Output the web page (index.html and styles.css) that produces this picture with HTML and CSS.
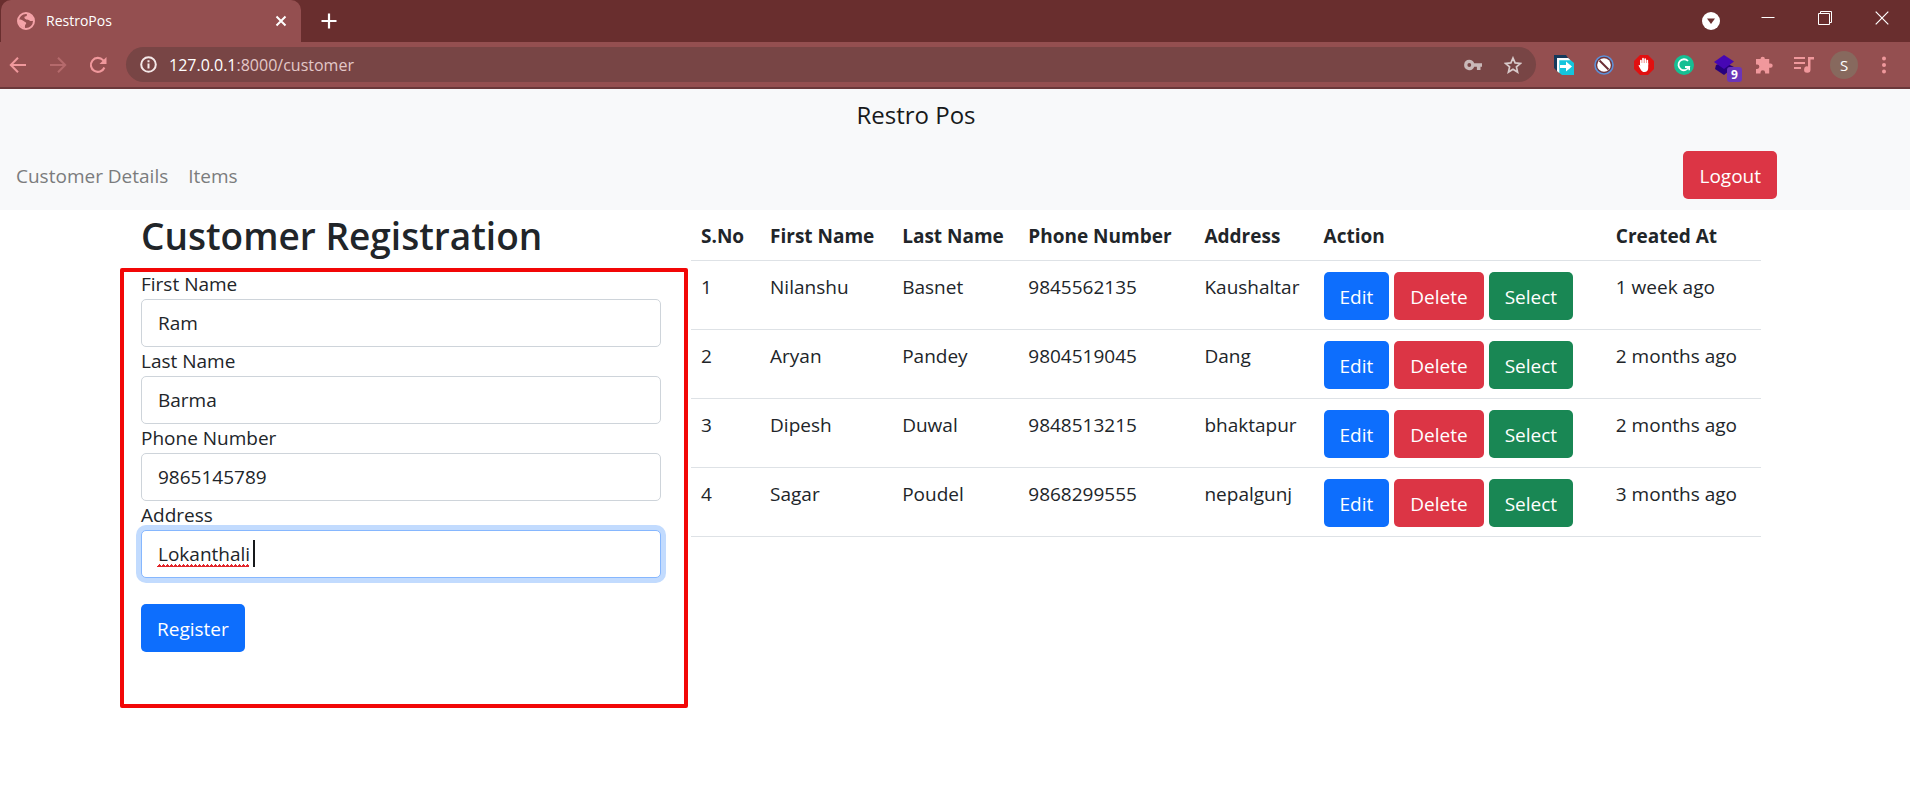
FILE: index.html
```html
<!DOCTYPE html>
<html lang="en">
<head>
<meta charset="utf-8">
<title>RestroPos</title>
<link rel="stylesheet" href="styles.css">
</head>
<body>
<header class="browser">
  <div class="tabstrip">
    <div class="tab">
      <svg class="favicon" viewBox="0 0 18 18" width="18" height="18"><circle cx="9" cy="9" r="8" fill="#944f50" stroke="#f4a3a8" stroke-width="2"/><path d="M1.500 7.500c2.500-.2 4.100.5 5.100 1.500 1 1 2 .8 2.500 1.700.4 1-.6 1.500-1 2.500-.3.800-.1 2-.1 3.200A8 8 0 0 1 1.500 7.500zM7.500 4.800l2.200-.7.300-2.600a7.500 7.500 0 0 1 6.500 7c-1.700 1-3.200.6-4-.1-1-.8-2.200-.3-3.200-.8C8.100 7 7 6 7.500 4.800z" fill="#f4a3a8"/></svg>
      <span class="tab-title">RestroPos</span>
      <button class="tab-close" aria-label="Close tab"><svg viewBox="0 0 12 12" width="12" height="12"><path d="M1.500 1.500l9 9M10.500 1.500l-9 9" stroke="#fff" stroke-width="2"/></svg></button>
    </div>
    <button class="new-tab" aria-label="New tab"><svg viewBox="0 0 16 16" width="16" height="16"><path d="M8 .5v15M.5 8h15" stroke="#fff" stroke-width="2.200"/></svg></button>
    <div class="window-controls">
      <button class="win" aria-label="Tab search"><svg class="low" viewBox="0 0 18 18" width="18" height="18"><circle cx="9" cy="9" r="9" fill="#fff"/><path d="M5 6.500h8l-4 5.500z" fill="#692e2e"/></svg></button>
      <button class="win" aria-label="Minimize"><svg viewBox="0 0 14 14" width="14" height="14"><path d="M.5 6.500h13" stroke="#fff"/></svg></button>
      <button class="win" aria-label="Restore"><svg viewBox="0 0 14 14" width="14" height="14"><path d="M.5 2.500h11v11H.5zM2.500 2.500v-2h11v11h-2" stroke="#fff" fill="none"/></svg></button>
      <button class="win" aria-label="Close"><svg viewBox="0 0 14 14" width="14" height="14"><path d="M.7.7l12.600 12.600M13.300.7L.7 13.300" stroke="#fff" stroke-width="1.200"/></svg></button>
    </div>
  </div>
  <div class="toolbar">
    <div class="nav-buttons">
      <button class="tool" aria-label="Back"><svg viewBox="0 0 18 18" width="18" height="18"><path d="M17 9H2M9 1.800L1.800 9 9 16.200" stroke="#f0989c" stroke-width="2" fill="none"/></svg></button>
      <button class="tool" aria-label="Forward"><svg viewBox="0 0 18 18" width="18" height="18"><path d="M1 9h15M9 1.800L16.200 9 9 16.200" stroke="#b56a6c" stroke-width="2" fill="none"/></svg></button>
      <button class="tool" aria-label="Reload"><svg viewBox="0 0 18 18" width="18" height="18"><path d="M15.400 11.500A7 7 0 1 1 14 4.100L15.500 6" stroke="#f0989c" stroke-width="2.100" fill="none"/><path d="M17.500 1v7h-7z" fill="#f0989c"/></svg></button>
    </div>
    <div class="omnibox">
      <svg viewBox="0 0 17 17" width="17" height="17"><circle cx="8.500" cy="8.500" r="7.300" stroke="#f5e9e9" stroke-width="2" fill="none"/><path d="M8.500 7.500v5M8.500 4.300v2" stroke="#f5e9e9" stroke-width="2"/></svg>
      <span class="url"><span class="host">127.0.0.1</span>:8000/customer</span>
      <button class="tool" aria-label="Passwords"><svg viewBox="0 0 18 12" width="18" height="12"><path fill-rule="evenodd" d="M5.300.7a5.200 5.200 0 0 1 4.900 3.500H18v3.600h-1.500V11h-3.600V7.800h-2.700A5.200 5.200 0 1 1 5.300.7zm0 3.400a1.900 1.900 0 1 0 0 3.800 1.900 1.900 0 0 0 0-3.800z" fill="#c9b8b8"/></svg></button>
      <button class="tool" aria-label="Bookmark"><svg viewBox="0 0 18 18" width="18" height="18"><path d="M9 2l2.100 4.900 5.300.5-4 3.500 1.200 5.200L9 13.300l-4.600 2.800 1.200-5.200-4-3.500 5.300-.5z" stroke="#d8caca" stroke-width="1.700" fill="none"/></svg></button>
    </div>
    <div class="extensions">
      <button class="tool" aria-label="Page assistant"><svg viewBox="0 0 20 20" width="20" height="20"><path d="M0 0h12l2 3H3v13L0 13z" fill="#163a5c"/><path d="M3 3h11l6 5v12H8l-5-4z" fill="#14c4dc"/><path d="M3 3h11l2.500 2.300H5.300V18L3 16z" fill="#fff"/><path d="M6 10h6V6.500l6 5-6 5V13H6z" fill="#fff"/></svg></button>
      <button class="tool" aria-label="Blocker"><svg viewBox="0 0 20 20" width="20" height="20"><circle cx="10" cy="10" r="9" fill="#70343a" stroke="#5d8fd6" stroke-width="1.600"/><circle cx="10" cy="10" r="6.800" fill="#fff"/><path d="M5.500 5.500l9 9" stroke="#6a2e35" stroke-width="1.900"/></svg></button>
      <button class="tool" aria-label="Ad blocker"><svg viewBox="0 0 20 20" width="20" height="20"><path d="M6 0h8l6 6v8l-6 6H6l-6-6V6z" fill="#e01010"/><path d="M6.900 10V5.500M9 9V3.700M11.200 9V4M13.300 10V5.500" stroke="#fff" stroke-width="1.700" stroke-linecap="round"/><path d="M6 8h8.200v5c0 2.500-1.500 4-3.700 4-2 0-3-.9-4-2.800l-2-3.700c.9-.8 1.500-.4 2 .6z" fill="#fff"/></svg></button>
      <button class="tool" aria-label="Grammar"><svg viewBox="0 0 20 20" width="20" height="20"><circle cx="10" cy="10" r="10" fill="#15bf93"/><path d="M14 6A5.500 5.500 0 1 0 15 12H11" stroke="#fff" stroke-width="1.800" fill="none"/><path d="M15.200 11.200v4" stroke="#fff" stroke-width="1.600"/></svg></button>
      <button class="tool badged" aria-label="Layers, 9"><svg viewBox="0 0 20 20" width="20" height="20"><path d="M2 10l8-3 10 5-10 8L1 14z" fill="#27007e"/><path d="M10 0l10 6.500-10 7.500L0 7z" fill="#4606b4"/></svg><span class="badge">9</span></button>
      <button class="tool" aria-label="Extensions"><svg viewBox="0 0 18 18" width="18" height="18"><path d="M5.500 3a2.200 2.200 0 0 1 4.400 0h4.300v4.400h1.300a2.200 2.200 0 0 1 0 4.400h-1.300v5.700h-4.100v-1a2.300 2.300 0 0 0-4.600 0v1H1v-4.600h1.200a2 2 0 0 0 0-4.300H1V3z" fill="#f0989c"/></svg></button>
      <button class="tool" aria-label="Media"><svg viewBox="0 0 20 18" width="20" height="18"><path d="M0 2h11M0 7h11M0 12h7" stroke="#f0989c" stroke-width="2"/><path d="M14 1h6v2.500h-3.500v10a3.200 3.200 0 1 1-2.500-3z" fill="#f0989c"/></svg></button>
      <button class="tool" aria-label="Profile"><span class="avatar">S</span></button>
      <button class="tool" aria-label="Menu"><svg viewBox="0 0 4 18" width="4" height="18"><circle cx="2" cy="2.500" r="2" fill="#f0989c"/><circle cx="2" cy="9" r="2" fill="#f0989c"/><circle cx="2" cy="15.500" r="2" fill="#f0989c"/></svg></button>
    </div>
  </div>
</header>

<nav class="site-nav">
  <a class="brand" href="#">Restro Pos</a>
  <div class="nav-row">
    <div class="links"><a href="#">Customer Details</a><a href="#">Items</a></div>
    <button class="btn red">Logout</button>
  </div>
</nav>

<div class="page">
<main class="content">
  <section>
    <h1>Customer Registration</h1>
    <form class="register">
      <label for="first">First Name</label>
      <input id="first" type="text" value="Ram">
      <label for="last">Last Name</label>
      <input id="last" type="text" value="Barma">
      <label for="phone">Phone Number</label>
      <input id="phone" type="text" value="9865145789">
      <label for="address">Address</label>
      <div class="field">
        <input id="address" class="focused" type="text" value="Lokanthali " spellcheck="false">
        <span class="squiggle"></span><span class="caret"></span>
      </div>
      <button class="btn blue" type="button">Register</button>
    </form>
  </section>
  <section>
    <table>
      <colgroup><col class="c-no"><col class="c-first"><col class="c-last"><col class="c-phone"><col class="c-address"><col class="c-action"><col class="c-created"></colgroup>
      <thead><tr><th>S.No</th><th>First Name</th><th>Last Name</th><th>Phone Number</th><th>Address</th><th>Action</th><th>Created At</th></tr></thead>
      <tbody>
        <tr><td>1</td><td>Nilanshu</td><td>Basnet</td><td>9845562135</td><td>Kaushaltar</td><td><div class="actions"><button class="btn blue">Edit</button><button class="btn red">Delete</button><button class="btn green">Select</button></div></td><td>1 week ago</td></tr>
        <tr><td>2</td><td>Aryan</td><td>Pandey</td><td>9804519045</td><td>Dang</td><td><div class="actions"><button class="btn blue">Edit</button><button class="btn red">Delete</button><button class="btn green">Select</button></div></td><td>2 months ago</td></tr>
        <tr><td>3</td><td>Dipesh</td><td>Duwal</td><td>9848513215</td><td>bhaktapur</td><td><div class="actions"><button class="btn blue">Edit</button><button class="btn red">Delete</button><button class="btn green">Select</button></div></td><td>2 months ago</td></tr>
        <tr><td>4</td><td>Sagar</td><td>Poudel</td><td>9868299555</td><td>nepalgunj</td><td><div class="actions"><button class="btn blue">Edit</button><button class="btn red">Delete</button><button class="btn green">Select</button></div></td><td>3 months ago</td></tr>
      </tbody>
    </table>
  </section>
</main>
</div>
</body>
</html>
```
FILE: styles.css
```css
* { box-sizing: border-box; }
body {
  margin: 0;
  background: #fff;
  color: #212529;
  font: 19px/30px "Open Sans", "Noto Sans", sans-serif;
}
button, input { font: inherit; color: inherit; }
button { border: 0; padding: 0; background: none; }
a { color: inherit; text-decoration: none; }
svg { display: block; flex: none; }

.browser { background: #944f50; border-bottom: 2px solid #6a383a; }
.tabstrip { display: flex; height: 42px; background: #692e2e; }
.tab {
  display: flex;
  align-items: center;
  width: 300px;
  margin-left: 1px;
  padding: 0 14px 0 16px;
  background: #944f50;
  border-radius: 10px 10px 0 0;
}
.tab-title {
  flex: 1;
  margin-left: 11px;
  color: #fff;
  font-size: 14px;
}
.new-tab { padding: 0 20px; }
.window-controls { display: flex; margin-left: auto; }
.win {
  display: flex;
  justify-content: center;
  width: 57px;
  padding-top: 11px;
}
.win .low { margin-top: 1px; }

.toolbar {
  display: flex;
  align-items: center;
  gap: 8px;
  height: 45px;
  padding-right: 6px;
}
.nav-buttons, .extensions { display: flex; }
.nav-buttons { margin-left: -2px; }
.tool {
  display: flex;
  align-items: center;
  justify-content: center;
  width: 40px;
  height: 36px;
}
.omnibox {
  display: flex;
  flex: 1;
  align-items: center;
  height: 35px;
  padding: 0 3px 0 14px;
  background: #784545;
  border-radius: 18px;
}
.url {
  flex: 1;
  margin-left: 12px;
  color: #e3c8c8;
  font-size: 16px;
}
.host { color: #fff; }
.badged { position: relative; }
.badge {
  position: absolute;
  left: 23px;
  top: 20px;
  width: 15px;
  background: #6b35b8;
  border-radius: 3px;
  color: #fff;
  font-size: 12px;
  font-weight: 700;
  line-height: 15px;
}
.avatar {
  width: 28px;
  background: #87695e;
  border-radius: 50%;
  color: #fff;
  font-size: 15px;
  line-height: 28px;
}

.site-nav { padding: 10px 0 11px; background: #f8f9fa; }
.brand {
  display: block;
  width: max-content;
  margin: 0 auto;
  padding-right: 78px;
  color: #17191b;
  font-size: 24px;
  line-height: 32px;
}
.nav-row {
  display: flex;
  align-items: center;
  justify-content: space-between;
  margin-top: 20px;
  padding: 0 133px 0 16px;
}
.links { display: flex; gap: 20px; padding-top: 2px; color: #7b7c7d; }

.btn {
  height: 48px;
  padding: 2px 16px 0;
  border-radius: 5px;
  color: #fff;
}
.red { background: #dc3545; }
.blue { background: #0d6efd; }
.green { background: #198754; }

.page { padding-right: 8px; }
.content {
  display: grid;
  grid-template-columns: 520fr 1070fr;
  gap: 30px;
  max-width: 1620px;
  margin: 0 auto;
}
h1 {
  margin: 0;
  font-size: 37px;
  font-weight: 600;
  line-height: 52px;
}
.register { position: relative; padding: 8px 0 56px; }
.register::after {
  content: "";
  position: absolute;
  inset: 6px -27px 0 -21px;
  border: 4px solid #f20707;
  border-radius: 2px;
  pointer-events: none;
}
.register label { display: block; line-height: 29px; }
.register input {
  display: block;
  width: 100%;
  height: 48px;
  padding: 0 16px;
  border: 1px solid #ced4da;
  border-radius: 5px;
  outline: 0;
}
.register .btn { margin-top: 26px; }
.field { position: relative; }
.register .focused { border-color: #86b7fe; box-shadow: 0 0 0 5px #c2dbfe; }
.squiggle {
  position: absolute;
  left: 16px;
  top: 34px;
  width: 92px;
  height: 3px;
  background: conic-gradient(from 135deg at 50% 0, #e2262b 90deg, transparent 0) 0 0 / 4px 3px;
}
.caret {
  position: absolute;
  left: 112px;
  top: 10px;
  width: 2px;
  height: 27px;
  background: #17191b;
}

table {
  width: 100%;
  table-layout: fixed;
  border-collapse: collapse;
}
th, td {
  padding: 11px 10px 9px;
  border-bottom: 1px solid #dee2e6;
  text-align: left;
  vertical-align: top;
  white-space: nowrap;
}
.c-no { width: 69px; }
.c-first { width: 132px; }
.c-last { width: 126px; }
.c-phone { width: 176px; }
.c-address { width: 119px; }
.c-action { width: 292px; }
.c-created { width: 155px; }
.actions { display: flex; gap: 5px; }
```
